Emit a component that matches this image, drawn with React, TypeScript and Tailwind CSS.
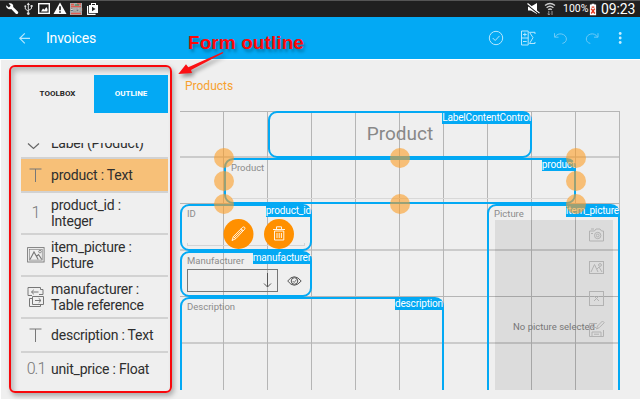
import type { ReactNode } from "react";

const gridColumns = Array.from({ length: 10 }, (_, i) => i);
const gridRows = [
  "h-[47px] border-b-2 border-[#cbcbcb]",
  "h-[46px] border-b border-[#b5b5b5]",
  "h-[47px] border-b-2 border-[#cbcbcb]",
  "h-[46px] border-b border-[#b5b5b5]",
  "h-[47px] border-b-2 border-[#cbcbcb]",
];

function PictureIcon() {
  return (
    <svg width="18" height="16" viewBox="0 0 18 16" fill="none" stroke="currentColor">
      <rect x=".6" y=".6" width="16.5" height="14.4" strokeWidth=".9" />
      <rect x="2.5" y="2.5" width="12.7" height="10.6" strokeWidth=".6" />
      <path d="M3 12.5 7 5l4.2 7.5M9.5 9.5l2-2 3.3 5" strokeWidth="1.1" />
      <circle cx="13" cy="4.6" r="1.3" strokeWidth=".8" />
    </svg>
  );
}

function TableIcon() {
  return (
    <svg width="18" height="22" viewBox="0 0 18 22" fill="none" stroke="currentColor" strokeWidth="1">
      <path d="M1 3.5V1.5h12.5v2M1 3.5v6h4M13.5 3.5H16v5h-4M4.5 6h7M6.8 3.8 4.5 6l2.3 2.2" />
      <path d="M5.5 10.5h11v8h-11zM8 14.5h6M11.7 12.3l2.3 2.2-2.3 2.2M5.5 12.5H2.5v8h11v-2" />
    </svg>
  );
}

function TextGlyph() {
  return (
    <svg width="14" height="15" viewBox="0 0 14 15" fill="none" stroke="currentColor">
      <path d="M.5 1h12M6.5 1v13" />
    </svg>
  );
}

function Row({ icon, children, className }: { icon: ReactNode; children: ReactNode; className: string }) {
  return (
    <li className={`flex shrink-0 items-center border-b-2 text-[14px] leading-4 text-[#2e2e2e] ${className}`}>
      <span className="flex w-[30px] shrink-0 items-center justify-center text-[#777]">{icon}</span>
      <span className="whitespace-nowrap tracking-[-0.22px]">{children}</span>
    </li>
  );
}

function StatusBar() {
  return (
    <div className="flex h-[17px] shrink-0 items-center border-t border-[#555] bg-[#202020] text-white">
      <svg width="100" height="16" viewBox="0 1 100 16" className="shrink-0">
        <path d="M6.3 5.2 8.8 7.4l1.9-1.6L8.6 3.4c2.6-1 5.2.9 4.6 3.6l4.8 4.7c1 1.3-1 3.2-2.2 2l-4.6-4.7C8.4 9.8 5.6 7.8 6.3 5.2z" fill="#fff" />
        <path d="M28.3 3.5v10M25.3 6.5v2.5l3 2.2M31.5 6v2.5l-3.2 2" fill="none" stroke="#ddd" strokeWidth="1" />
        <path d="m26.7 5 1.6-2.6L30 5z" fill="#ddd" />
        <circle cx="28.3" cy="13.6" r="1.4" fill="#ddd" />
        <circle cx="25.3" cy="6.2" r="1" fill="#ddd" />
        <path d="M30.6 5h2v2h-2z" fill="#ddd" />
        <rect x="38.7" y="3.7" width="10.6" height="9.6" fill="none" stroke="#fff" strokeWidth="1.4" />
        <path d="m41 11.5 2-3 1.5 1.3 1.8-2.8L47.5 9v2.5z" fill="#fff" />
        <path d="m60 2.5 6.5 11.5h-13z" fill="#fff" />
        <path d="M60 6.2v4M60 11.2v1.5" stroke="#222" strokeWidth="1.7" />
        <path d="M70 3h12v12H70z" fill="#aaa" />
        <path d="M71 4.5h3M77 4h4M71 6.5h10M71 13.5h10" stroke="#e05c51" strokeWidth="1.5" />
        <path d="M75 5h4" stroke="#29885b" />
        <text x="70.2" y="11.6" fontSize="4.5" fontWeight="700" fill="#fff" stroke="#333" strokeWidth=".2" fontFamily="Roboto, sans-serif">AUKU</text>
        <path d="M87.6 6v8.4h8" fill="none" stroke="#fff" strokeWidth="1.2" />
        <path d="M89 5h9v8h-9zm2-2h5v2h-1V4h-3v1h-1z" fill="#fff" />
        <path d="m92 6.8 3.5 2.2L92 11.2z" fill="#222" />
      </svg>
      <svg width="34" height="16" viewBox="524 1 34 16" className="ml-auto shrink-0" fill="none" stroke="#fff">
        <path d="M526 6.5h3l6-3.5v11l-6-3.5h-3z" fill="#fff" stroke="none" />
        <path d="m525 4.6 12 9.6" stroke="#202020" strokeWidth="1.2" />
        <path d="m525.5 3.5 12 9.6" strokeWidth="1.2" />
        <path d="M543 5.5q5-4 10 0M544.6 7.7q3.4-2.8 6.8 0M546.2 9.7q1.8-1.4 3.6 0" stroke="#ccc" strokeWidth="1.4" />
        <path d="M546.8 11v4m-1.2-1.3 1.2 1.3 1.2-1.3M550 15v-4" stroke="#999" />
      </svg>
      <span className="ml-[3px] w-[26px] text-[10.5px] whitespace-nowrap">100%</span>
      <svg width="8" height="13" viewBox="0 0 9 13" className="shrink-0">
        <path d="M1 1h2V0h3v1h2v12H1z" fill="#fff" />
        <path d="m2.5 11 4-5.5m-4 0 4 5.5M3 3.8h3" stroke="#e5391d" strokeWidth="1.6" />
      </svg>
      <span className="mr-[3px] ml-[4px] w-[36px] text-[14px] tracking-[-0.1px] whitespace-nowrap">09:23</span>
    </div>
  );
}

function Toolbar() {
  return (
    <header className="flex h-[42px] shrink-0 items-center bg-[#03a9f4] text-[14px] text-white">
      <svg width="46" height="42" viewBox="0 17 46 42" fill="none" stroke="#b6e7fd" strokeWidth="1.2">
        <path d="M30 38.3H20M24.8 33.3l-5 5 5 5" />
      </svg>
      <h1 className="tracking-[-0.2px]">Invoices</h1>
      <svg width="160" height="42" viewBox="480 17 160 42" className="ml-auto" fill="none" stroke="#b6e7fd" strokeWidth="1">
        <circle cx="496" cy="38" r="6.7" />
        <path d="m492.7 38 2.5 2.5 4.3-4.6" />
        <path d="M521.5 31h6.7v14h-6.7zM521.5 38h6.7M523 34.5h3.7M524.9 32.7v3.6M523 41.5h3.7M535 34v-1.7h-5.5l3.5 5.4-3.5 5.8h5.5V42" />
        <g stroke="#6bcaf7">
          <path d="M554.5 33.2v4h4M555 37c3-5.4 11.4-3.2 11.4 2 0 2.4-1.7 4-4 4.4" />
          <path d="M598 33.2v4h-4M597.5 37c-3-5.4-11.2-3.2-11.2 2 0 2.4 1.7 4 4 4.4" />
        </g>
        <g fill="#c6edfe" stroke="none">
          <circle cx="620.2" cy="33.5" r="1.4" />
          <circle cx="620.2" cy="38" r="1.4" />
          <circle cx="620.2" cy="42.5" r="1.4" />
        </g>
      </svg>
    </header>
  );
}

function Outline() {
  return (
    <aside className="mt-[5px] ml-[8px] h-[328px] w-[163px] shrink-0 rounded-[6px] border-2 border-[#f8080c] pl-[10px] shadow-[2px_3px_5px_#aaa,inset_3px_4px_5px_#bbb]">
      <nav className="mt-[8px] flex h-[38px] w-[147px] text-[8px] font-bold">
        <button className="w-[73px] bg-[#efefef] text-[#252525]">TOOLBOX</button>
        <button className="w-[74px] bg-[#03a9f4] text-white">OUTLINE</button>
      </nav>
      <ul className="mt-[30px] flex h-[244px] w-[147px] flex-col overflow-hidden">
        <li className="flex h-[16px] shrink-0 items-end border-b-2 border-[#d2d2d2] pb-[6px] text-[14px] leading-4 text-[#2e2e2e]">
          <span className="flex w-[30px] shrink-0 pl-[6px] text-[#666]">
            <svg width="14" height="8" fill="none" stroke="currentColor" strokeWidth="1.2"><path d="m1 .5 5.5 5 5.5-5" /></svg>
          </span>
          <span className="whitespace-nowrap tracking-[-0.22px]">Label (Product)</span>
        </li>
        <Row className="h-[34px] border-[#d2d2d2] bg-[#f7c078]" icon={<TextGlyph />}>product : Text</Row>
        <Row className="h-[42px] border-[#d2d2d2]" icon={<span className="text-[16px] font-light">1</span>}>product_id :<br />Integer</Row>
        <Row className="h-[42px] border-[#d2d2d2]" icon={<PictureIcon />}>item_picture :<br />Picture</Row>
        <Row className="h-[42px] border-[#d2d2d2]" icon={<TableIcon />}>manufacturer :<br />Table reference</Row>
        <Row className="h-[34px] border-[#d2d2d2]" icon={<TextGlyph />}>description : Text</Row>
        <Row className="h-[34px] border-transparent" icon={<span className="text-[16px] font-light tracking-[-1px]">0.1</span>}>unit_price : Float</Row>
      </ul>
    </aside>
  );
}

function Field({ tag, caption, className, children }: { tag: string; caption?: string; className: string; children?: ReactNode }) {
  return (
    <section className={`relative flex flex-col border-2 border-[#03a9f4] px-[5px] pt-[2px] ${className}`}>
      {caption && <span className="text-[9.5px] leading-[12px] whitespace-nowrap text-[#8b8b8b]">{caption}</span>}
      {children}
      <span className="absolute -top-px -right-px rounded-tr-[7px] bg-[#03a9f4] text-[10px] leading-[12px] tracking-[-0.15px] whitespace-nowrap text-white">{tag}</span>
    </section>
  );
}

function Handle({ className }: { className: string }) {
  return <i className={`absolute size-[20px] rounded-full bg-[#fc9d25]/60 ${className}`} />;
}

function FormGrid() {
  return (
    <div className="relative mt-[17px] grid h-[279px] w-[440px] grid-cols-[repeat(10,44px)] grid-rows-[47px_46px_47px_46px_47px_46px]">
      <div className="absolute inset-0 border-t border-[#b5b5b5]">
        {gridRows.map((row, i) => <div key={i} className={`${row} ${i === 0 ? "-mt-px" : ""}`} />)}
      </div>
      <div className="absolute inset-0 flex">
        {gridColumns.map((i) => <div key={i} className="w-[44px] border-r border-[#b5b5b5]" />)}
      </div>

      <Field tag="LabelContentControl" className="col-span-6 col-start-3 row-start-1 rounded-[9px]">
        <span className="mt-[6px] text-center text-[19px] leading-[26px] text-[#888]">Product</span>
      </Field>
      <Field tag="product" caption="Product" className="col-span-8 col-start-2 row-start-2 rounded-[9px]">
        <hr className="mt-auto mb-[3px] border-[#d8d8d8]" />
      </Field>
      <Field tag="product_id" caption="ID" className="col-span-3 col-start-1 row-start-3 rounded-[9px]">
        <div className="mt-auto mb-[3px] h-[3px] border border-t-0 border-[#d4d4d4]" />
        <svg className="absolute top-[12px] left-[41px]" width="72" height="32" fill="none">
          <circle cx="15.5" cy="16" r="15" fill="#ff9000" />
          <circle cx="56" cy="16" r="15" fill="#ff9000" />
          <g stroke="#fff" strokeWidth=".9">
            <path d="m9 22.5 1.4-4L19.6 9.3q1.2-.8 2 0t0 2L12.8 20.6zM10.4 18.5l2.4 2.1M18 10.8l2.1 2.1M11.5 19.5l8-7.8" />
            <path d="M50 11.5h12M53.5 11V8.8h5V11M51.5 13h9.3v9h-9.3zM54 15v5m2.2-5v5m2.2-5v5" />
          </g>
        </svg>
      </Field>
      <Field tag="manufacturer" caption="Manufacturer" className="col-span-3 col-start-1 row-start-4 rounded-[9px]">
        <div className="mt-[2px] flex items-center gap-[9px]">
          <div className="flex h-[23px] w-[91px] items-center justify-end border border-[#777] pr-[4px] text-[#555]">
            <svg width="11" height="17" fill="none" stroke="currentColor"><path d="M5.5 1v14M2 11.5 5.5 15 9 11.5" /></svg>
          </div>
          <svg width="15" height="12" fill="none" stroke="#555">
            <path d="M.7 6q6.5-8.5 13.5 0-7 8.5-13.5 0z" />
            <circle cx="7.5" cy="6" r="3.3" />
            <path d="m5.7 6 1.5 1.5 2.3-3" strokeWidth=".8" />
          </svg>
        </div>
      </Field>
      <Field tag="description" caption="Description" className="col-span-6 col-start-1 row-span-2 row-start-5 rounded-t-[9px] border-b-0" />
      <Field tag="item_picture" caption="Picture" className="col-span-3 col-start-8 row-span-4 row-start-3 -ml-px rounded-t-[9px] border-b-0">
        <div className="relative ml-px flex grow justify-center bg-black/8 pt-[100px] text-[9.5px] whitespace-nowrap text-[#777]">
          No picture selected
          <svg className="absolute top-[5px] right-[8px] text-[#b2b2b2]" width="17" height="115" fill="none" stroke="currentColor">
            <path d="M1.5 6h5l1.5-2h4l1.5 2h2v10h-14zM3 4h3" />
            <circle cx="9.7" cy="10.5" r="3.2" /><circle cx="9.7" cy="10.5" r="1.4" /><path d="M3 8.5h2" />
            <rect x="1.5" y="36.5" width="14" height="12" />
            <path d="m3 47 3.5-7.5L10 47m-1-3 2-2 3 5" /><circle cx="12" cy="40" r="1.4" />
            <rect x="1.5" y="66.5" width="14" height="14" /><path d="m6 71 5 5m-5 0 5-5" />
            <path d="M9 98.5H1.5v13h14V105M4 98.5v4h4M4 111v-4h9v4M6 109.2h5M8.5 104l1-3 5-5 1.7 1.7-5 5z" />
          </svg>
        </div>
      </Field>

      <Handle className="top-[37px] left-[34px]" />
      <Handle className="top-[60px] left-[34px]" />
      <Handle className="top-[83px] left-[34px]" />
      <Handle className="top-[37px] left-[210px]" />
      <Handle className="top-[83px] left-[210px]" />
      <Handle className="top-[37px] left-[386px]" />
      <Handle className="top-[60px] left-[386px]" />
      <Handle className="top-[83px] left-[386px]" />
    </div>
  );
}

export default function App() {
  return (
    <main className="relative flex h-[400px] w-[640px] flex-col overflow-hidden bg-[#efefef] font-['Roboto',sans-serif]">
      <StatusBar />
      <Toolbar />
      <div className="flex grow border-t border-b border-l border-white">
        <Outline />
        <div className="ml-[8px] pt-[18px]">
          <h2 className="pl-[5px] text-[12px] leading-4 text-[#f7a12e]">Products</h2>
          <FormGrid />
        </div>
      </div>
      <div className="absolute top-[31px] left-[188px] font-['Liberation_Sans',sans-serif] text-[19px] leading-6 font-bold tracking-[0.08px] whitespace-nowrap text-[#ff0808] [text-shadow:2px_3px_3px_#0004]">Form outline</div>
      <svg className="absolute top-[48px] left-[174px] drop-shadow-[2px_3px_2px_#0006]" width="56" height="34" viewBox="174 48 56 34">
        <path d="m178.3 74 7.7-9.7 2.3 3 34.3-15.3.8.9L191 70l1 3z" fill="#fb1014" />
      </svg>
    </main>
  );
}
